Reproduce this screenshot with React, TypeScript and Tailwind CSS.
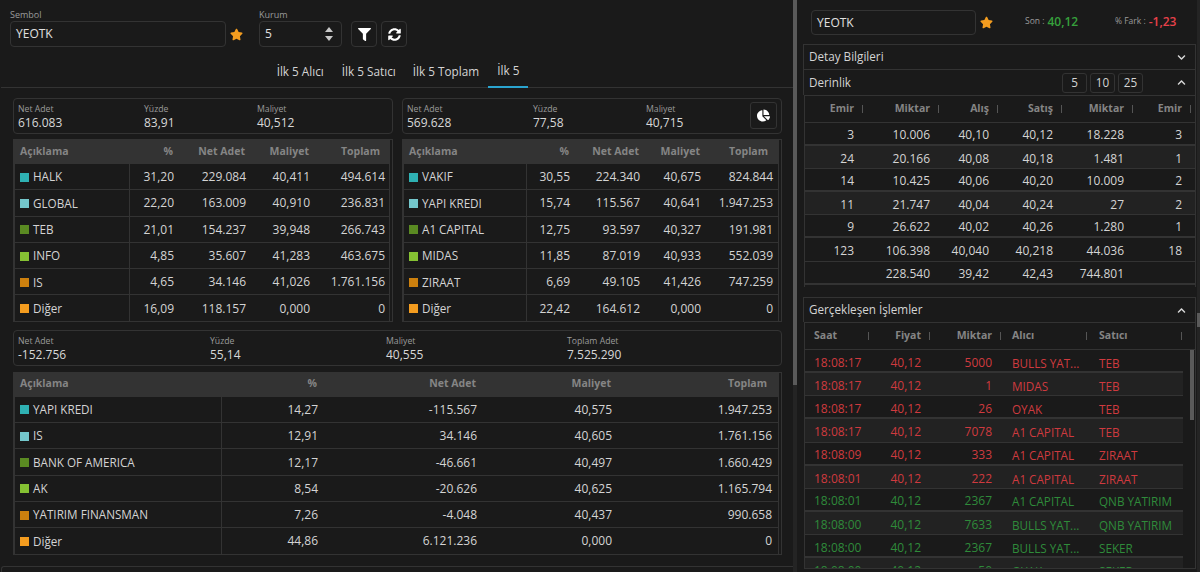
import { FaStar, FaFilter, FaSyncAlt, FaChartPie, FaChevronDown, FaChevronUp } from "react-icons/fa";

const S = ["bg-[#2fb1b3]", "bg-[#74c7cc]", "bg-[#5a8a22]", "bg-[#85c133]", "bg-[#cc800e]", "bg-[#f39c1f]"];

function Card({ items, pie, cols }: { items: [string, string][]; pie?: boolean; cols: string }) {
  return (
    <div className={`relative h-[36px] rounded-[4px] border border-[#333] pl-[4px] pt-[5px] grid ${cols}`}>
      {items.map(([l, v]) => (
        <div key={l}>
          <div className="text-[8.7px] leading-[10px] text-[#9a9a9a]">{l}</div>
          <div className="text-[12px] leading-[17px] text-[#d8d8d8]">{v}</div>
        </div>
      ))}
      {pie && (
        <div className="absolute right-[4px] top-[3px] w-[27px] h-[27px] rounded-[3px] border border-[#333] flex items-center justify-center text-white">
          <FaChartPie size={13} />
        </div>
      )}
    </div>
  );
}

function DataTable({ rows, cols }: { rows: string[][]; cols: string }) {
  const head = ["Açıklama", "%", "Net Adet", "Maliyet", "Toplam"];
  return (
    <div className="border border-l-2 border-[#333] pr-[2px]">
      <div className="border-r border-[#333]">
        <div className={`grid ${cols} h-[23px] items-center bg-[#333] text-[10.5px] font-bold text-[#858585]`}>
          {head.map((h, i) => (
            <div key={h} className={i === 0 ? "pl-[5px]" : i === 4 ? "text-right pr-[10px]" : "text-right pr-[6px]"}>{h}</div>
          ))}
        </div>
        {rows.map((r, ri) => (
          <div key={ri} className={`grid ${cols} h-[26.3px] border-t border-[#333] first:border-t-0 text-[12px] text-[#d4d4d4]`}>
            {r.map((c, i) =>
              i === 0 ? (
                <div key={i} className="flex items-center pl-[5px] pt-[1px] border-r border-[#333] overflow-hidden whitespace-nowrap text-[11.7px]">
                  <span className={`w-[9px] h-[9px] mr-[4px] shrink-0 ${S[ri]}`} />
                  {c}
                </div>
              ) : (
                <div key={i} className="flex items-center justify-end pr-[5px] pt-[1px]">{c}</div>
              ),
            )}
          </div>
        ))}
      </div>
    </div>
  );
}

const t1 = [
  ["HALK", "31,20", "229.084", "40,411", "494.614"],
  ["GLOBAL", "22,20", "163.009", "40,910", "236.831"],
  ["TEB", "21,01", "154.237", "39,948", "266.743"],
  ["INFO", "4,85", "35.607", "41,283", "463.675"],
  ["IS", "4,65", "34.146", "41,026", "1.761.156"],
  ["Diğer", "16,09", "118.157", "0,000", "0"],
];
const t2 = [
  ["VAKIF", "30,55", "224.340", "40,675", "824.844"],
  ["YAPI KREDI", "15,74", "115.567", "40,641", "1.947.253"],
  ["A1 CAPITAL", "12,75", "93.597", "40,327", "191.981"],
  ["MIDAS", "11,85", "87.019", "40,933", "552.039"],
  ["ZIRAAT", "6,69", "49.105", "41,426", "747.259"],
  ["Diğer", "22,42", "164.612", "0,000", "0"],
];
const t3 = [
  ["YAPI KREDI", "14,27", "-115.567", "40,575", "1.947.253"],
  ["IS", "12,91", "34.146", "40,605", "1.761.156"],
  ["BANK OF AMERICA", "12,17", "-46.661", "40,497", "1.660.429"],
  ["AK", "8,54", "-20.626", "40,625", "1.165.794"],
  ["YATIRIM FINANSMAN", "7,26", "-4.048", "40,437", "990.658"],
  ["Diğer", "44,86", "6.121.236", "0,000", "0"],
];

const depth = [
  ["3", "10.006", "40,10", "40,12", "18.228", "3"],
  ["24", "20.166", "40,08", "40,18", "1.481", "1"],
  ["14", "10.425", "40,06", "40,20", "10.009", "2"],
  ["11", "21.747", "40,04", "40,24", "27", "2"],
  ["9", "26.622", "40,02", "40,26", "1.280", "1"],
  ["123", "106.398", "40,040", "40,218", "44.036", "18"],
  ["", "228.540", "39,42", "42,43", "744.801", ""],
];
const depthCols = "grid-cols-[58px_76px_59px_64px_71px_58px]";

const trades: [string, string, string, string, string, boolean][] = [
  ["18:08:17", "40,12", "5000", "BULLS YAT...", "TEB", false],
  ["18:08:17", "40,12", "1", "MIDAS", "TEB", false],
  ["18:08:17", "40,12", "26", "OYAK", "TEB", false],
  ["18:08:17", "40,12", "7078", "A1 CAPITAL", "TEB", false],
  ["18:08:09", "40,12", "333", "A1 CAPITAL", "ZIRAAT", false],
  ["18:08:01", "40,12", "222", "A1 CAPITAL", "ZIRAAT", false],
  ["18:08:01", "40,12", "2367", "A1 CAPITAL", "QNB YATIRIM", true],
  ["18:08:00", "40,12", "7633", "BULLS YAT...", "QNB YATIRIM", true],
  ["18:08:00", "40,12", "2367", "BULLS YAT...", "SEKER", true],
  ["18:08:00", "40,12", "50", "OYAK", "SEKER", true],
];
const tradeCols = "grid-cols-[64px_61px_71px_86px_95px]";

function Handle() {
  return <span className="absolute right-0 top-[9px] w-[1px] h-[8px] bg-[#555]" />;
}

export default function App() {
  return (
    <div className="w-[1200px] h-[572px] overflow-hidden bg-[#1a1a1a] flex font-['Open_Sans',sans-serif] text-[#d4d4d4]">
      {/* Left */}
      <div className="w-[794px] shrink-0 flex flex-col">
        <div className="flex items-end h-[47px] pl-[10px] shrink-0">
          <div className="w-[216px]">
            <div className="text-[9px] leading-[11px] mb-[1px] text-[#9a9a9a]">Sembol</div>
            <div className="h-[26px] rounded-[4px] border border-[#333] pl-[5px] flex items-center text-[12px] text-[#e0e0e0]">YEOTK</div>
          </div>
          <div className="w-[33px] h-[26px] flex items-center pl-[4px] text-[#f39c1f]"><FaStar size={13} /></div>
          <div className="w-[83px]">
            <div className="text-[9px] leading-[11px] mb-[1px] text-[#9a9a9a]">Kurum</div>
            <div className="relative h-[26px] rounded-[4px] border border-[#333] pl-[5px] flex items-center text-[12px] text-[#e0e0e0]">
              5
              <span className="absolute right-[8px] top-[5px] w-0 h-0 border-x-[4px] border-x-transparent border-b-[5px] border-b-[#c8c8c8]" />
              <span className="absolute right-[8px] bottom-[5px] w-0 h-0 border-x-[4px] border-x-transparent border-t-[5px] border-t-[#c8c8c8]" />
            </div>
          </div>
          <div className="ml-[9px] w-[26px] h-[26px] rounded-[4px] border border-[#333] flex items-center justify-center text-white"><FaFilter size={13} /></div>
          <div className="ml-[4px] w-[26px] h-[26px] rounded-[4px] border border-[#333] flex items-center justify-center text-white"><FaSyncAlt size={13} /></div>
        </div>

        <div className="h-[41px] mx-[1px] pl-[2px] border-b border-[#333] flex justify-center text-[11.75px] text-[#d4d4d4] shrink-0">
          <div className="flex items-end">
            <div className="px-[9px] pb-[6px]">İlk 5 Alıcı</div>
            <div className="px-[9px] pb-[6px]">İlk 5 Satıcı</div>
            <div className="pl-[8px] pr-[9px] pb-[6px]">İlk 5 Toplam</div>
            <div className="px-[9px] pb-[6px] border-b-2 border-[#2aa4cf] -mb-[1px]">İlk 5</div>
          </div>
        </div>

        <div className="pl-[13px] pr-[12px] pt-[10px] flex-1 flex flex-col min-h-0">
          <div className="grid grid-cols-[380px_380px] gap-x-[9px]">
            <div>
              <Card cols="grid-cols-[126px_113px_1fr]" items={[["Net Adet", "616.083"], ["Yüzde", "83,91"], ["Maliyet", "40,512"]]} />
              <div className="mt-[5px]"><DataTable rows={t1} cols="grid-cols-[115px_49px_72px_64px_75px]" /></div>
            </div>
            <div>
              <Card pie cols="grid-cols-[126px_113px_1fr]" items={[["Net Adet", "569.628"], ["Yüzde", "77,58"], ["Maliyet", "40,715"]]} />
              <div className="mt-[5px]"><DataTable rows={t2} cols="grid-cols-[123px_48px_70px_61px_72px]" /></div>
            </div>
          </div>
          <div className="mt-[8px]">
            <Card cols="grid-cols-[192px_176px_181px_1fr]" items={[["Net Adet", "-152.756"], ["Yüzde", "55,14"], ["Maliyet", "40,555"], ["Toplam Adet", "7.525.290"]]} />
          </div>
          <div className="mt-[6px] w-[769px]"><DataTable rows={t3} cols="grid-cols-[207px_101px_159px_135px_160px]" /></div>
        </div>
        <div className="h-[6px] mx-[1px] border-t border-l border-[#333] rounded-tl-[3px] shrink-0" />
      </div>

      {/* Scrollbar */}
      <div className="w-[9px] shrink-0 relative">
        <div className="absolute -left-[1px] top-0 w-[4px] h-full bg-[#242424]" />
        <div className="absolute -left-[1px] top-0 w-[4px] h-[385px] bg-[#5a5a5a]" />
      </div>

      {/* Right */}
      <div className="w-[393px] shrink-0 flex flex-col">
        <div className="h-[44px] flex items-start pt-[10px] pl-[8px] shrink-0">
          <div className="w-[165px] h-[25px] rounded-[4px] border border-[#333] pl-[5px] flex items-center text-[12px] text-[#e0e0e0]">YEOTK</div>
          <div className="w-[49px] h-[25px] flex items-center pl-[4px] text-[#f39c1f]"><FaStar size={13} /></div>
          <div className="h-[23px] flex items-center w-[90px]">
            <span className="text-[8.5px] text-[#9a9a9a] mr-[3px]">Son :</span>
            <span className="text-[12px] font-semibold text-[#36a03c]">40,12</span>
          </div>
          <div className="h-[23px] flex items-center">
            <span className="text-[8.5px] text-[#9a9a9a] mr-[3px]">% Fark :</span>
            <span className="text-[12px] font-semibold text-[#e8414a]">-1,23</span>
          </div>
        </div>

        <div className="h-[25px] border-t border-x border-[#333] flex items-center justify-between pl-[5px] pr-[9px] text-[11.7px] shrink-0">
          <span>Detay Bilgileri</span>
          <FaChevronDown size={9} className="text-[#d8d8d8]" />
        </div>
        <div className="h-[26px] border-t border-x border-[#333] flex items-center pl-[5px] pr-[9px] text-[11.7px] shrink-0">
          <span>Derinlik</span>
          <div className="ml-auto flex gap-[3px] mr-[34px] text-[11.7px]">
            {["5", "10", "25"].map((b) => (
              <div key={b} className="w-[25px] h-[20px] rounded-[3px] border border-[#333] flex items-center justify-center">{b}</div>
            ))}
          </div>
          <FaChevronUp size={9} className="text-[#d8d8d8]" />
        </div>

        <div className="ml-[1px] h-[192px] border-t border-x border-[#333] shrink-0">
          <div className={`grid ${depthCols} h-[27px] items-center text-[10.5px] font-bold text-[#858585] border-b border-[#333]`}>
            {["Emir", "Miktar", "Alış", "Satış", "Miktar", "Emir"].map((h, i) => (
              <div key={i} className="relative h-[26px] flex items-center justify-end pr-[9px]">{h}<Handle /></div>
            ))}
          </div>
          {depth.map((r, ri) => (
            <div key={ri} className={`grid ${depthCols} h-[23.1px] pt-[3px] items-center text-[12px] leading-[16px] ${ri % 2 === 0 ? "border-b-2" : "border-b"} border-[#333] ${ri === 1 || ri === 3 ? "bg-[#222]" : ""}`}>
              {r.map((c, i) => (
                <div key={i} className="text-right pr-[9px]">{c}</div>
              ))}
            </div>
          ))}
        </div>

        <div className="mt-[10px] h-[25px] border-t border-x border-[#333] flex items-center justify-between pl-[5px] pr-[9px] text-[11.7px] shrink-0">
          <span>Gerçekleşen İşlemler</span>
          <FaChevronUp size={9} className="text-[#d8d8d8]" />
        </div>

        <div className="relative ml-[1px] flex-1 min-h-0 border-y border-x border-[#333] overflow-hidden">
          <div className={`grid ${tradeCols} h-[27px] items-center text-[10.5px] font-bold text-[#858585] border-b border-[#333]`}>
            {["Saat", "Fiyat", "Miktar", "Alıcı", "Satıcı"].map((h, i) => (
              <div
                key={i}
                className={`relative h-[26px] flex items-center ${i === 0 ? "pl-[9px]" : i === 3 ? "pl-[11px]" : i === 4 ? "pl-[12px]" : "justify-end pr-[9px]"}`}
              >
                {h}<Handle />
              </div>
            ))}
          </div>
          {trades.map((r, ri) => (
            <div key={ri} className={`grid ${tradeCols} w-[378px] h-[23.15px] pt-[4px] items-center text-[12px] leading-[16px] ${ri % 2 === 0 ? "border-b-2" : "border-b"} border-[#333] ${ri % 2 === 1 ? "bg-[#222]" : ""} ${r[5] ? "text-[#2f8b3a]" : "text-[#cf3a3f]"}`}>
              <div className="pl-[9px]">{r[0]}</div>
              <div className="text-right pr-[9px]">{r[1]}</div>
              <div className="text-right pr-[9px]">{r[2]}</div>
              <div className="pl-[11px] whitespace-nowrap text-[11.7px]">{r[3]}</div>
              <div className="pl-[12px] whitespace-nowrap text-[11.7px]">{r[4]}</div>
            </div>
          ))}
          <div className="absolute right-[1px] top-[27px] w-[4px] h-[70px] bg-[#5a5a5a]" />
        </div>
        <div className="h-[3px] shrink-0" />
      </div>

      {/* Outer thin scrollbar */}
      <div className="ml-[1px] w-[3px] shrink-0 bg-[#242424] relative">
        <div className="absolute left-0 top-[313px] w-[3px] h-[14px] bg-[#5a5a5a]" />
      </div>
    </div>
  );
}
